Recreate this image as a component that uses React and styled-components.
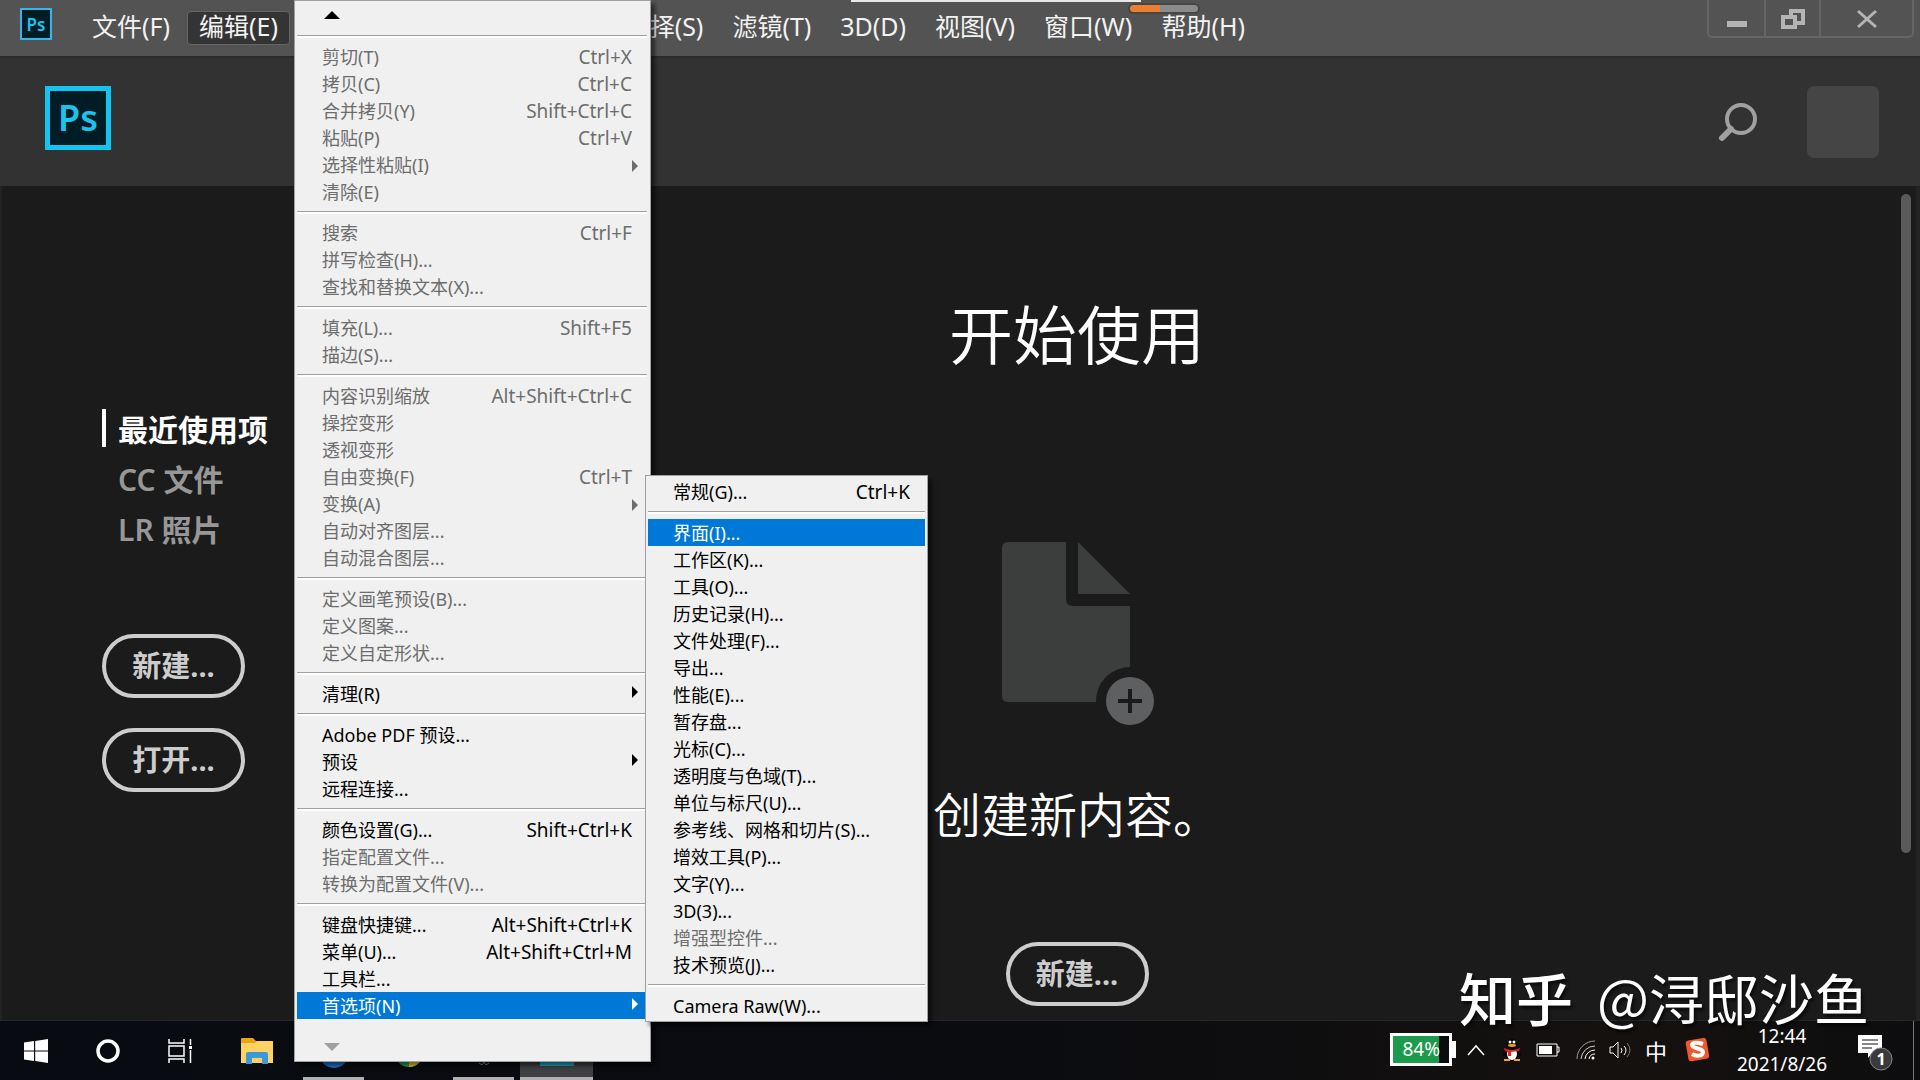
import React from 'react'
import styled, { createGlobalStyle, css } from 'styled-components'

const GlobalStyle = createGlobalStyle`
  * {
    box-sizing: border-box;
  }

  body {
    margin: 0;
    background: #1b1b1b;
    font-family: 'Noto Sans', 'Noto Sans CJK SC', sans-serif;
  }

  button {
    font-family: inherit;
    border: 0;
    padding: 0;
    background: none;
    color: inherit;
  }
`

const Desktop = styled.div`
  position: relative;
  min-height: 100vh;
  display: flex;
  flex-direction: column;
  overflow: hidden;
`

const MenuBar = styled.header`
  height: 58px;
  display: flex;
  align-items: flex-start;
  background: #535353;
  border-bottom: 2px solid #2a2a2a;
`

const PsBadge = styled.div`
  flex: none;
  display: flex;
  align-items: center;
  justify-content: center;
  width: ${props => (props.$large ? 66 : 32)}px;
  height: ${props => (props.$large ? 64 : 32)}px;
  border: ${props => (props.$large ? '5px solid #12c4f0' : '2px solid #35b6e6')};
  background: #001d26;
  color: #1bc3ee;
  font-size: ${props => (props.$large ? 36 : 17)}px;
  font-weight: 600;
  line-height: 1;
`

const BarBrand = styled.div`
  padding: 8px 0 0 20px;
`

const BarItems = styled.nav`
  display: flex;
  flex: 1;
  gap: 5px;
  padding: 11px 0 0 28px;
`

const BarItem = styled.button`
  height: 34px;
  padding: 0 11px 4px;
  border: 1px solid transparent;
  border-radius: 4px;
  color: #f2f2f2;
  font-size: 25px;
  line-height: 28px;
  white-space: nowrap;

  ${props =>
    props.$active &&
    css`
      background: #343434;
      border-color: #656565;
    `}
`

const WindowControls = styled.div`
  display: flex;
  height: 38px;
  margin-right: 6px;
  border: 2px solid #656565;
  border-top: 0;
  border-radius: 0 0 5px 5px;
`

const WindowButton = styled.button`
  display: flex;
  justify-content: center;
  width: ${props => props.$width}px;
  padding-top: 8px;

  & + & {
    border-left: 2px solid #656565;
  }
`

const TopStrip = styled.div`
  position: absolute;
  top: 0;
  left: 851px;
  width: 290px;
  height: 2px;
  background: #e8e8e8;
`

const Pill = styled.div`
  position: absolute;
  top: 3px;
  left: 1128px;
  width: 72px;
  height: 11px;
  border: 2px solid #464646;
  border-radius: 6px;
  background: linear-gradient(to right, #ed7d31 30px, #8b8b8b 30px);
`

const HomeHeader = styled.div`
  height: 128px;
  display: flex;
  align-items: flex-start;
  padding: 28px 41px 0 45px;
  background: #323232;
`

const HeaderTools = styled.div`
  display: flex;
  align-items: center;
  gap: 48px;
  margin-left: auto;
`

const SearchButton = styled.button`
  padding-top: 4px;
`

const Avatar = styled.div`
  width: 72px;
  height: 72px;
  border-radius: 7px;
  background: #454545;
`

const Workspace = styled.div`
  position: relative;
  flex: 1;
  display: flex;
  border-left: 2px solid #232323;
  border-right: 4px solid #232323;
  background: #1b1b1b;
`

const Sidebar = styled.aside`
  width: 266px;
  padding: 217px 0 0 100px;
`

const NavLink = styled.a`
  display: flex;
  align-items: center;
  height: 50px;
  color: ${props => (props.$active ? '#fff' : '#979797')};
  font-size: 30px;
  font-weight: ${props => (props.$active ? 700 : 600)};
  white-space: nowrap;
  text-decoration: none;

  &::before {
    content: '';
    width: 4px;
    height: 38px;
    margin-right: 12px;
    background: ${props => (props.$active ? '#fff' : 'transparent')};
  }
`

const SideActions = styled.div`
  display: flex;
  flex-direction: column;
  align-items: flex-start;
  gap: 30px;
  margin-top: 81px;
`

const PillButton = styled.button`
  width: 143px;
  height: 64px;
  border: 4px solid #cdcdcd;
  border-radius: 32px;
  color: #cdcdcd;
  font-size: 29px;
  font-weight: 700;
  line-height: 54px;
`

const Main = styled.main`
  flex: 1;
  display: flex;
  flex-direction: column;
  align-items: center;
  padding: 109px 30px 14px 0;
  color: #fff;
`

const Title = styled.h1`
  margin: 0 0 167px;
  font-size: 64px;
  font-weight: 350;
  line-height: 80px;
`

const Hint = styled.p`
  margin: 60px 0 97px;
  font-size: 48px;
  font-weight: 350;
  line-height: 60px;
`

const ScrollThumb = styled.div`
  position: absolute;
  top: 8px;
  right: 5px;
  width: 10px;
  height: 79%;
  border-radius: 5px;
  background: #5a5a5a;
`

const Popup = styled.ul`
  position: absolute;
  z-index: 2;
  margin: 0;
  list-style: none;
  border: 1px solid #a0a0a0;
  background: #f0f0f0;
  box-shadow: 4px 4px 4px rgba(0, 0, 0, 0.5);
`

const EditPopup = styled(Popup)`
  top: 0;
  left: 294px;
  width: 357px;
  padding: 0 3px 0 2px;
`

const SubPopup = styled(Popup)`
  left: 348px;
  bottom: -3px;
  width: 283px;
  padding: 2px;
`

const ScrollRow = styled.li`
  height: ${props => (props.$end ? 42 : 28)}px;
  padding: ${props => (props.$end ? 24 : 10)}px 0 0 27px;

  svg {
    display: block;
  }
`

const Divider = styled.li`
  height: 14px;
  padding-top: 6px;

  &::before {
    content: '';
    display: block;
    height: 2px;
    border-top: 1px solid #a0a0a0;
    background: #fff;
  }
`

const MenuRow = styled.li`
  position: relative;
`

const MenuButton = styled.button`
  display: flex;
  align-items: center;
  width: 100%;
  height: 27px;
  padding: 2px 9px 0 25px;
  background: ${props => (props.$selected ? '#0078d7' : 'none')};
  color: ${props => (props.$selected ? '#fff' : '#000')};
  font-size: 18px;
  line-height: 25px;
  white-space: nowrap;

  &:disabled {
    color: #6d6d6d;
  }
`

const Shortcut = styled.span`
  margin-left: auto;
  padding-right: 6px;
  font-size: 19px;
`

const SubArrow = styled.svg`
  margin-left: auto;

  ${MenuButton}:enabled & {
    margin-bottom: 6px;
  }
`

const Taskbar = styled.footer`
  height: 60px;
  display: flex;
  justify-content: space-between;
  border-top: 1px solid #26272a;
  background: linear-gradient(to right, #080b11, #0b0c10 55%, #15110f 85%, #0d0d0f);
  color: #fff;
`

const TaskGroup = styled.div`
  display: flex;
`

const TaskButton = styled.button`
  position: relative;
  display: flex;
  align-items: center;
  justify-content: center;
  width: ${props => props.$width || 73}px;
  background: ${props => (props.$active ? '#3e4044' : 'none')};

  ${props =>
    props.$open &&
    css`
      &::after {
        content: '';
        position: absolute;
        right: ${props.$active ? 0 : 6}px;
        bottom: 0;
        left: ${props.$active ? 0 : 6}px;
        height: 3px;
        background: #b0b0b0;
      }
    `}
`

const Tray = styled.div`
  display: flex;
  align-items: center;
  margin-right: 6px;
  padding-bottom: 2px;
  border-right: 1px solid #77777a;
`

const TrayButton = styled.button`
  display: flex;
  align-items: center;
  justify-content: center;
  width: ${props => props.$width || 36}px;
  height: 57px;
  font-size: 22px;
`

const Battery = styled.div`
  display: flex;
  align-items: center;

  &::after {
    content: '';
    width: 4px;
    height: 17px;
    background: #fff;
  }
`

const BatteryLevel = styled.div`
  width: 62px;
  height: 33px;
  padding-right: 9px;
  border: 3px solid #fff;
  background: linear-gradient(to right, #1d9a4b 46px, #0b0c10 46px);
  font-size: 19px;
  line-height: 26px;
  text-align: right;
`

const Clock = styled.time`
  display: flex;
  flex-direction: column;
  gap: 8px;
  width: 122px;
  font-size: 19px;
  line-height: 20px;
  text-align: center;
`

const Watermark = styled.div`
  position: absolute;
  right: 51px;
  bottom: 57px;
  z-index: 1;
  display: flex;
  align-items: center;
  gap: 24px;
  color: #fff;
  font-family: 'Noto Sans CJK SC', sans-serif;
  font-size: 55px;
  line-height: 54px;
  text-shadow: 2px 3px 3px rgba(0, 0, 0, 0.6);
  white-space: nowrap;

  strong {
    font-size: 57px;
    font-weight: 500;
  }
`

const barItems = [
  '文件(F)',
  '编辑(E)',
  '图像(I)',
  '图层(L)',
  '文字(Y)',
  '选择(S)',
  '滤镜(T)',
  '3D(D)',
  '视图(V)',
  '窗口(W)',
  '帮助(H)',
]

const prefGroups = [
  [{ label: '常规(G)...', keys: 'Ctrl+K' }],
  [
    { label: '界面(I)...', selected: true },
    { label: '工作区(K)...' },
    { label: '工具(O)...' },
    { label: '历史记录(H)...' },
    { label: '文件处理(F)...' },
    { label: '导出...' },
    { label: '性能(E)...' },
    { label: '暂存盘...' },
    { label: '光标(C)...' },
    { label: '透明度与色域(T)...' },
    { label: '单位与标尺(U)...' },
    { label: '参考线、网格和切片(S)...' },
    { label: '增效工具(P)...' },
    { label: '文字(Y)...' },
    { label: '3D(3)...' },
    { label: '增强型控件...', off: true },
    { label: '技术预览(J)...' },
  ],
  [{ label: 'Camera Raw(W)...' }],
]

const editGroups = [
  [
    { label: '剪切(T)', keys: 'Ctrl+X', off: true },
    { label: '拷贝(C)', keys: 'Ctrl+C', off: true },
    { label: '合并拷贝(Y)', keys: 'Shift+Ctrl+C', off: true },
    { label: '粘贴(P)', keys: 'Ctrl+V', off: true },
    { label: '选择性粘贴(I)', arrow: true, off: true },
    { label: '清除(E)', off: true },
  ],
  [
    { label: '搜索', keys: 'Ctrl+F', off: true },
    { label: '拼写检查(H)...', off: true },
    { label: '查找和替换文本(X)...', off: true },
  ],
  [
    { label: '填充(L)...', keys: 'Shift+F5', off: true },
    { label: '描边(S)...', off: true },
  ],
  [
    { label: '内容识别缩放', keys: 'Alt+Shift+Ctrl+C', off: true },
    { label: '操控变形', off: true },
    { label: '透视变形', off: true },
    { label: '自由变换(F)', keys: 'Ctrl+T', off: true },
    { label: '变换(A)', arrow: true, off: true },
    { label: '自动对齐图层...', off: true },
    { label: '自动混合图层...', off: true },
  ],
  [
    { label: '定义画笔预设(B)...', off: true },
    { label: '定义图案...', off: true },
    { label: '定义自定形状...', off: true },
  ],
  [{ label: '清理(R)', arrow: true }],
  [
    { label: 'Adobe PDF 预设...' },
    { label: '预设', arrow: true },
    { label: '远程连接...' },
  ],
  [
    { label: '颜色设置(G)...', keys: 'Shift+Ctrl+K' },
    { label: '指定配置文件...', off: true },
    { label: '转换为配置文件(V)...', off: true },
  ],
  [
    { label: '键盘快捷键...', keys: 'Alt+Shift+Ctrl+K' },
    { label: '菜单(U)...', keys: 'Alt+Shift+Ctrl+M' },
    { label: '工具栏...' },
    { label: '首选项(N)', arrow: true, selected: true, children: prefGroups },
  ],
]

function MenuItem({ item }) {
  return (
    <MenuRow>
      <MenuButton $selected={item.selected} disabled={item.off}>
        {item.label}
        {item.keys && <Shortcut>{item.keys}</Shortcut>}
        {item.arrow && (
          <SubArrow width="6" height="12" fill="currentColor">
            <path d="M0 0l6 6-6 6z" />
          </SubArrow>
        )}
      </MenuButton>
      {item.children && (
        <SubPopup>
          <MenuGroups groups={item.children} />
        </SubPopup>
      )}
    </MenuRow>
  )
}

function MenuGroups({ groups }) {
  return groups.map((group, i) => (
    <React.Fragment key={i}>
      {i > 0 && <Divider />}
      {group.map(item => (
        <MenuItem key={item.label} item={item} />
      ))}
    </React.Fragment>
  ))
}

function EditMenu() {
  return (
    <EditPopup>
      <ScrollRow>
        <svg width="16" height="8">
          <path d="M0 8l8-8 8 8z" fill="#000" />
        </svg>
      </ScrollRow>
      <Divider />
      <MenuGroups groups={editGroups} />
      <ScrollRow $end>
        <svg width="16" height="8">
          <path d="M0 0h16l-8 8z" fill="#a0a0a0" />
        </svg>
      </ScrollRow>
    </EditPopup>
  )
}

function TopBar() {
  return (
    <MenuBar>
      <BarBrand>
        <PsBadge>Ps</PsBadge>
      </BarBrand>
      <BarItems>
        {barItems.map(label => (
          <BarItem key={label} $active={label === '编辑(E)'}>
            {label}
          </BarItem>
        ))}
      </BarItems>
      <WindowControls>
        <WindowButton $width={55} aria-label="最小化">
          <svg width="20" height="20">
            <path d="M0 13h20v6H0z" fill="#b4b4b4" />
          </svg>
        </WindowButton>
        <WindowButton $width={55} aria-label="还原">
          <svg width="24" height="22" fill="none" stroke="#b4b4b4" strokeWidth="4">
            <path d="M10 7V3h12v12h-6" />
            <path d="M2 9h12v10H2z" />
          </svg>
        </WindowButton>
        <WindowButton $width={93} aria-label="关闭">
          <svg width="20" height="22" stroke="#b4b4b4" strokeWidth="3">
            <path d="M1 3l18 16M19 3L1 19" />
          </svg>
        </WindowButton>
      </WindowControls>
    </MenuBar>
  )
}

function Home() {
  return (
    <Workspace>
      <Sidebar>
        <NavLink href="#recent" $active>
          最近使用项
        </NavLink>
        <NavLink href="#cc">CC 文件</NavLink>
        <NavLink href="#lr">LR 照片</NavLink>
        <SideActions>
          <PillButton>新建...</PillButton>
          <PillButton>打开...</PillButton>
        </SideActions>
      </Sidebar>
      <Main>
        <Title>开始使用</Title>
        <svg width="156" height="183">
          <path
            d="M9 0h58v57q0 7 7 7h57v61a34 34 0 0 0-34 35H9q-6 0-6-6V6q0-6 6-6z"
            fill="#3c3d3d"
          />
          <path d="M79 0l52 52H79z" fill="#3c3d3d" />
          <circle cx="131" cy="159" r="24" fill="#5e5f61" />
          <path d="M119 159h24M131 147v24" stroke="#1b1b1b" strokeWidth="4" />
        </svg>
        <Hint>创建新内容。</Hint>
        <PillButton>新建...</PillButton>
      </Main>
      <ScrollThumb />
    </Workspace>
  )
}

function TaskIcons() {
  return (
    <TaskGroup>
      <TaskButton $width={72} aria-label="开始">
        <svg width="24" height="24" fill="#fff">
          <path d="M0 3.500l10-1.400v9.400H0zM11.200 2L24 0v11.500H11.200zM0 12.600h10V22L0 20.500zM11.200 12.600H24V24l-12.800-1.900z" />
        </svg>
      </TaskButton>
      <TaskButton $width={72} aria-label="搜索">
        <svg width="24" height="24">
          <circle cx="12" cy="12" r="10" fill="none" stroke="#fff" strokeWidth="3.500" />
        </svg>
      </TaskButton>
      <TaskButton $width={72} aria-label="任务视图">
        <svg width="24" height="24" fill="none" stroke="#fff" strokeWidth="1.500">
          <path d="M1 0v4h15V0M1 24v-4h15v4M1 7h15v10H1zM22.500 0v6M22.500 11v13" />
          <path d="M21 7h3v3h-3z" fill="#fff" stroke="none" />
        </svg>
      </TaskButton>
      <TaskButton $width={81} aria-label="文件资源管理器">
        <svg width="32" height="26">
          <path d="M0 1q0-1 1-1h11l3 3h16q1 0 1 1v21H0z" fill="#e8a317" />
          <path d="M0 5h14l2-2h15q1 0 1 1v21H0z" fill="#ffd363" />
          <path d="M5 26V16q0-2 2-2h18q2 0 2 2v10h-6v-6H11v6z" fill="#3f97d8" />
        </svg>
      </TaskButton>
      <TaskButton $open aria-label="浏览器">
        <svg width="30" height="36">
          <circle cx="15" cy="20" r="15" fill="#1e73cf" />
        </svg>
      </TaskButton>
      <TaskButton $width={77} aria-label="Chrome">
        <svg width="28" height="34">
          <circle cx="14" cy="19" r="14" fill="#2e9f4d" />
          <path d="M14 19v14a14 14 0 0 0 14-14z" fill="#f3c52c" />
          <circle cx="14" cy="19" r="6" fill="#3c7fe0" />
        </svg>
      </TaskButton>
      <TaskButton $open aria-label="任务">
        <svg width="14" height="28">
          <path d="M2 26l3 2 2-3 2 3 3-2" fill="none" stroke="#888" />
        </svg>
      </TaskButton>
      <TaskButton $open $active aria-label="Photoshop">
        <svg width="34" height="32">
          <path d="M0 0h34v31H0z" fill="#1ba3bd" />
        </svg>
      </TaskButton>
    </TaskGroup>
  )
}

function SystemTray() {
  return (
    <Tray>
      <Battery>
        <BatteryLevel>84%</BatteryLevel>
      </Battery>
      <TrayButton $width={40} aria-label="显示隐藏的图标">
        <svg width="18" height="12" fill="none" stroke="#fff" strokeWidth="1.500">
          <path d="M1 11l8-9 8 9" />
        </svg>
      </TrayButton>
      <TrayButton $width={32} aria-label="QQ">
        <svg width="20" height="24">
          <path d="M3 12Q0 16 1 19l3-2z" fill="#080808" />
          <path d="M17 12q3 4 2 7l-3-2z" fill="#080808" />
          <ellipse cx="10" cy="14" rx="7" ry="8" fill="#050505" />
          <ellipse cx="10" cy="16" rx="5" ry="6" fill="#fff" />
          <ellipse cx="10" cy="7" rx="5" ry="6" fill="#050505" />
          <circle cx="8" cy="4" r="1.500" fill="#fff" />
          <circle cx="12" cy="4" r="1.500" fill="#fff" />
          <ellipse cx="10" cy="7.500" rx="4" ry="1.400" fill="#f0a31c" />
          <path d="M2 10q8 4 16 0l-1 3-8 1v4H6v-4l-3-1z" fill="#e5202b" />
          <path d="M2 21h6v2H2zM12 21h6v2h-6z" fill="#f0a31c" />
        </svg>
      </TrayButton>
      <TrayButton $width={40} aria-label="电池">
        <svg width="24" height="14">
          <path d="M1 1h20v12H1zM21 4h2v5h-2" fill="none" stroke="#fff" />
          <path d="M3 3h13v8H3z" fill="#fff" />
        </svg>
      </TrayButton>
      <TrayButton aria-label="无线网络">
        <svg width="20" height="20" fill="none" stroke="#999">
          <path d="M1 19A18 18 0 0 1 19 1" />
          <path d="M5 19A14 14 0 0 1 19 6" stroke="#ccc" />
          <path d="M9 19a10 10 0 0 1 10-9" stroke="#fff" />
          <path d="M13 19a6 6 0 0 1 6-5" stroke="#fff" />
          <circle cx="17" cy="18" r="1.500" fill="#fff" stroke="none" />
        </svg>
      </TrayButton>
      <TrayButton $width={34} aria-label="音量">
        <svg width="24" height="20" fill="none" stroke="#fff">
          <path d="M1 7h3l5-5v16l-5-5H1z" />
          <path d="M12 8q2 2 0 5M15 6q4 4 0 9" />
          <path d="M18 3q6 7 0 14" stroke="#777" />
        </svg>
      </TrayButton>
      <TrayButton>中</TrayButton>
      <TrayButton $width={47} aria-label="输入法">
        <svg width="26" height="26">
          <rect x="2" y="2" width="21" height="21" rx="3" fill="#ee5a2c" transform="rotate(-10 13 13)" />
          <path
            d="M18 7q-10-3-11 1c0 4 11 3 11 7 0 5-8 4-11 2"
            fill="none"
            stroke="#fff"
            strokeWidth="4"
          />
        </svg>
      </TrayButton>
      <Clock>
        <span>12:44</span>
        <span>2021/8/26</span>
      </Clock>
      <TrayButton $width={70} aria-label="通知">
        <svg width="44" height="42">
          <path d="M2 6h24v18H16l-4 5v-5H2z" fill="#fff" />
          <path d="M6 11h16M6 15h16M6 19h10" stroke="#111" />
          <circle cx="25" cy="30" r="11" fill="#3a3a3c" stroke="#858588" />
          <text x="25" y="36" fill="#fff" fontSize="16" fontWeight="700" textAnchor="middle">
            1
          </text>
        </svg>
      </TrayButton>
    </Tray>
  )
}

function App() {
  return (
    <Desktop>
      <GlobalStyle />
      <TopBar />
      <HomeHeader>
        <PsBadge $large>Ps</PsBadge>
        <HeaderTools>
          <SearchButton aria-label="搜索">
            <svg width="42" height="42" fill="none" stroke="#a0a0a0">
              <circle cx="24" cy="18" r="14" strokeWidth="4" />
              <path d="M14 28L5 37" strokeWidth="6" strokeLinecap="round" />
            </svg>
          </SearchButton>
          <Avatar />
        </HeaderTools>
      </HomeHeader>
      <Home />
      <Taskbar>
        <TaskIcons />
        <SystemTray />
      </Taskbar>
      <TopStrip />
      <Pill />
      <EditMenu />
      <Watermark>
        <strong>知乎</strong>
        <span>@浔邸沙鱼</span>
      </Watermark>
    </Desktop>
  )
}

export default App
